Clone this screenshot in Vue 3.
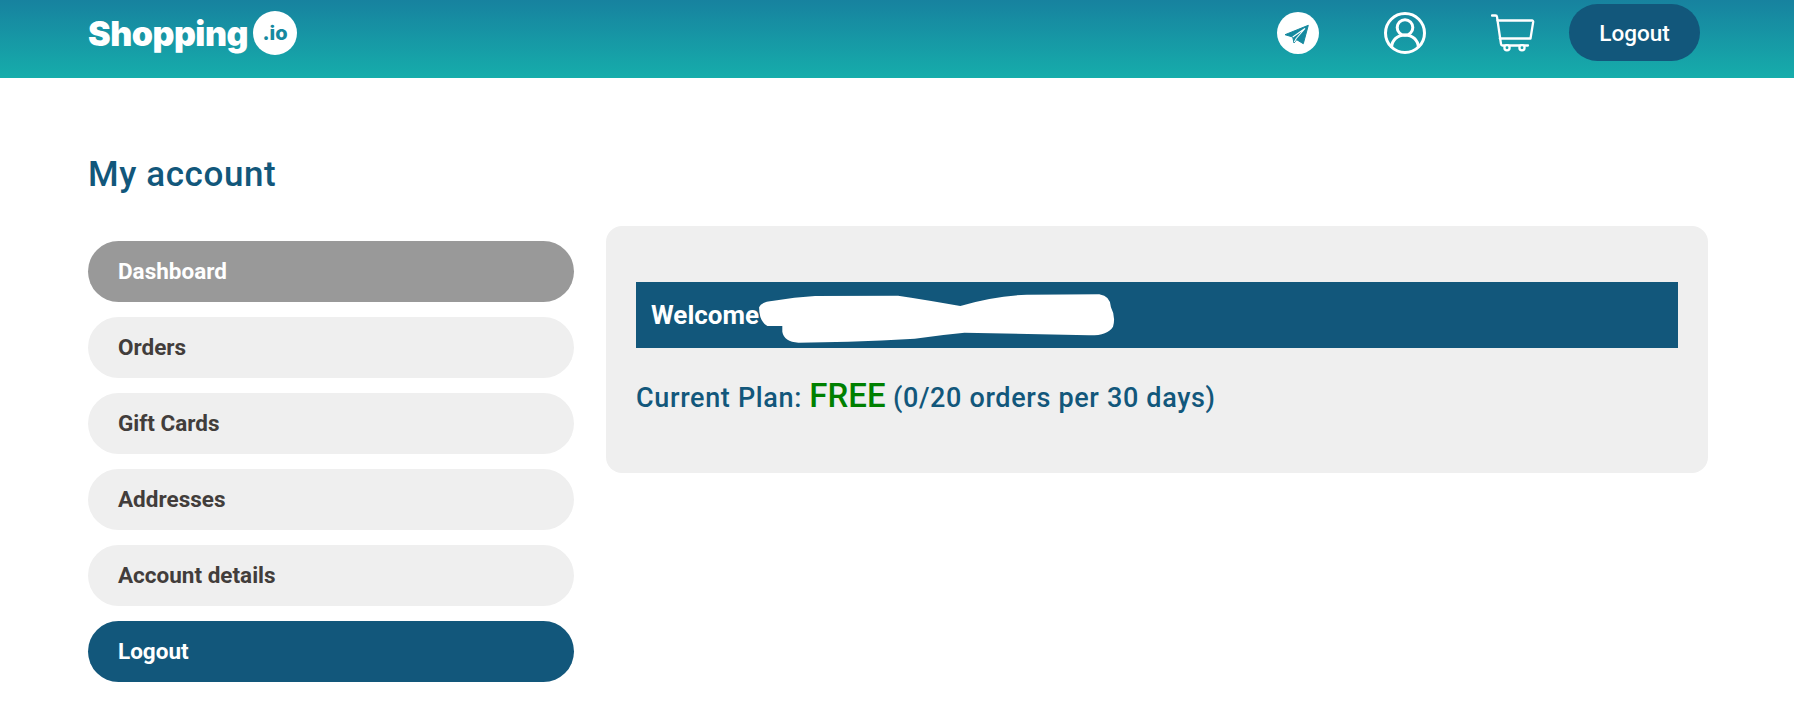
<template>
  <div class="page">
    <header class="topbar">
      <div class="logo">
        <span class="logo-word">Shopping</span>
        <span class="logo-badge">.io</span>
      </div>
      <div class="actions">
        <!-- telegram -->
        <svg class="icon" width="44" height="44" viewBox="0 0 44 44">
          <circle cx="22" cy="22" r="21" fill="#fff" />
          <path d="M9 23.700 32.300 14.300 27.300 32.700 20.700 28.700 18 32 16.700 26Z" fill="#16899f" stroke="#16899f" stroke-width="1" stroke-linejoin="round" />
          <path d="M16.700 26 29 17.500 20.200 27.500 18.300 31" fill="none" stroke="#fff" stroke-width="1.100" />
        </svg>
        <!-- user -->
        <svg class="icon user" width="44" height="44" viewBox="0 0 44 44" fill="none" stroke="#fff" stroke-width="3">
          <circle cx="22" cy="22" r="19.500" />
          <circle cx="22" cy="16.500" r="7.800" />
          <path d="M8.500 36.500c.5-7.500 6-12.600 13.500-12.600s13 5.100 13.500 12.600" />
        </svg>
        <!-- cart -->
        <svg class="icon cart" width="44" height="38" viewBox="0 0 44 38" fill="none" stroke="#fff" stroke-width="2.300" stroke-linecap="round" stroke-linejoin="round">
          <path d="M1 1.500h3.500c.8 0 1.400.5 1.500 1.300L10 30c.1 1 .7 1.500 1.500 1.500H37" />
          <path d="M6.500 6.500H41c.8 0 1.300.6 1.200 1.400L39.500 24.500H8.800" />
          <circle cx="16" cy="33.800" r="2.600" fill="#16a3a9" />
          <circle cx="31" cy="33.800" r="2.600" fill="#16a3a9" />
        </svg>
        <button class="logout-btn">Logout</button>
      </div>
    </header>

    <main class="main">
      <h1 class="title">My account</h1>
      <div class="columns">
        <nav class="side">
          <a
            v-for="item in navItems"
            :key="item.label"
            class="side-item"
            :class="item.cls"
          >{{ item.label }}</a>
        </nav>
        <section class="card">
          <div class="welcome">
            Welcome
            <!-- scribble over the name -->
            <svg class="scribble" width="361" height="49" viewBox="380 222 870 147" preserveAspectRatio="none">
              <path
                fill="#fff"
                d="M385 262Q390 245 420 242Q470 232 520 228L720 227Q790 240 870 258Q950 228 1030 224L1205 223Q1232 228 1233 262Q1245 290 1238 320Q1225 347 1180 346L880 338Q820 345 760 356Q680 362 600 365L480 368Q445 365 441 335L441 318L405 318Q385 305 385 262Z"
              />
            </svg>
          </div>
          <p class="plan">Current Plan: <span class="free">FREE</span> (0/20 orders per 30 days)</p>
        </section>
      </div>
    </main>
  </div>
</template>

<script setup>
const navItems = [
  { label: 'Dashboard', cls: 'active' },
  { label: 'Orders', cls: '' },
  { label: 'Gift Cards', cls: '' },
  { label: 'Addresses', cls: '' },
  { label: 'Account details', cls: '' },
  { label: 'Logout', cls: 'dark' }
]
</script>

<style>
html,
body {
  margin: 0;
  background: #fff;
}
</style>

<style scoped>
.page {
  font-family: Roboto, "Liberation Sans", sans-serif;
}
.topbar {
  height: 78px;
  box-sizing: border-box;
  padding: 0 94px 0 88px;
  display: flex;
  align-items: center;
  justify-content: space-between;
  background: linear-gradient(to bottom, #17829f, #16adab);
}
.logo {
  display: flex;
  align-items: center;
  gap: 5px;
  margin-top: -12px;
}
.logo-word {
  font-family: Inter, "Liberation Sans", sans-serif;
  font-size: 34px;
  font-weight: 900;
  letter-spacing: -0.5px;
  color: #fff;
}
.logo-badge {
  width: 44px;
  height: 44px;
  border-radius: 50%;
  background: #fff;
  color: #16899f;
  font-family: Inter, "Liberation Sans", sans-serif;
  font-size: 20px;
  font-weight: 800;
  display: flex;
  align-items: center;
  justify-content: center;
}
.actions {
  display: flex;
  align-items: center;
  margin-top: -13px;
}
.icon {
  display: block;
}
.user {
  margin-left: 63px;
}
.cart {
  margin-left: 64px;
}
.logout-btn {
  margin-left: 34px;
  width: 131px;
  height: 57px;
  border: none;
  border-radius: 29px;
  background: #12577b;
  color: #fff;
  font-family: Roboto, "Liberation Sans", sans-serif;
  font-size: 22.500px;
  font-weight: 500;
}
.main {
  padding: 0 86px 0 88px;
}
.title {
  margin: 75px 0 0;
  height: 73px;
  font-family: Roboto, "Liberation Sans", sans-serif;
  font-size: 35px;
  line-height: 44px;
  font-weight: 500;
  letter-spacing: 0.6px;
  color: #12577b;
}
.columns {
  display: grid;
  grid-template-columns: 486px 1102px;
  column-gap: 32px;
  align-items: start;
}
.side {
  display: flex;
  flex-direction: column;
  gap: 15px;
  margin-top: 15px;
}
.side-item {
  height: 61px;
  box-sizing: border-box;
  padding: 0 30px 2px;
  display: flex;
  align-items: center;
  border-radius: 31px;
  background: #efefef;
  color: #423d3b;
  font-size: 22.500px;
  font-weight: 700;
}
.side-item.active {
  background: #999;
  color: #fff;
}
.side-item.dark {
  background: #12577b;
  color: #fff;
}
.card {
  height: 247px;
  box-sizing: border-box;
  padding: 56px 30px 0 30px;
  border-radius: 16px;
  background: #efefef;
}
.welcome {
  position: relative;
  height: 66px;
  box-sizing: border-box;
  padding-left: 15px;
  display: flex;
  align-items: center;
  background: #12577b;
  color: #fff;
  font-size: 26px;
  font-weight: 700;
}
.scribble {
  position: absolute;
  left: 121px;
  top: 12px;
}
.plan {
  margin: 31px 0 0;
  font-size: 27px;
  line-height: 34px;
  font-weight: 500;
  letter-spacing: 0.65px;
  color: #12577b;
}
.free {
  font-size: 33px;
  font-weight: 500;
  letter-spacing: 0;
  color: #008000;
}
</style>
